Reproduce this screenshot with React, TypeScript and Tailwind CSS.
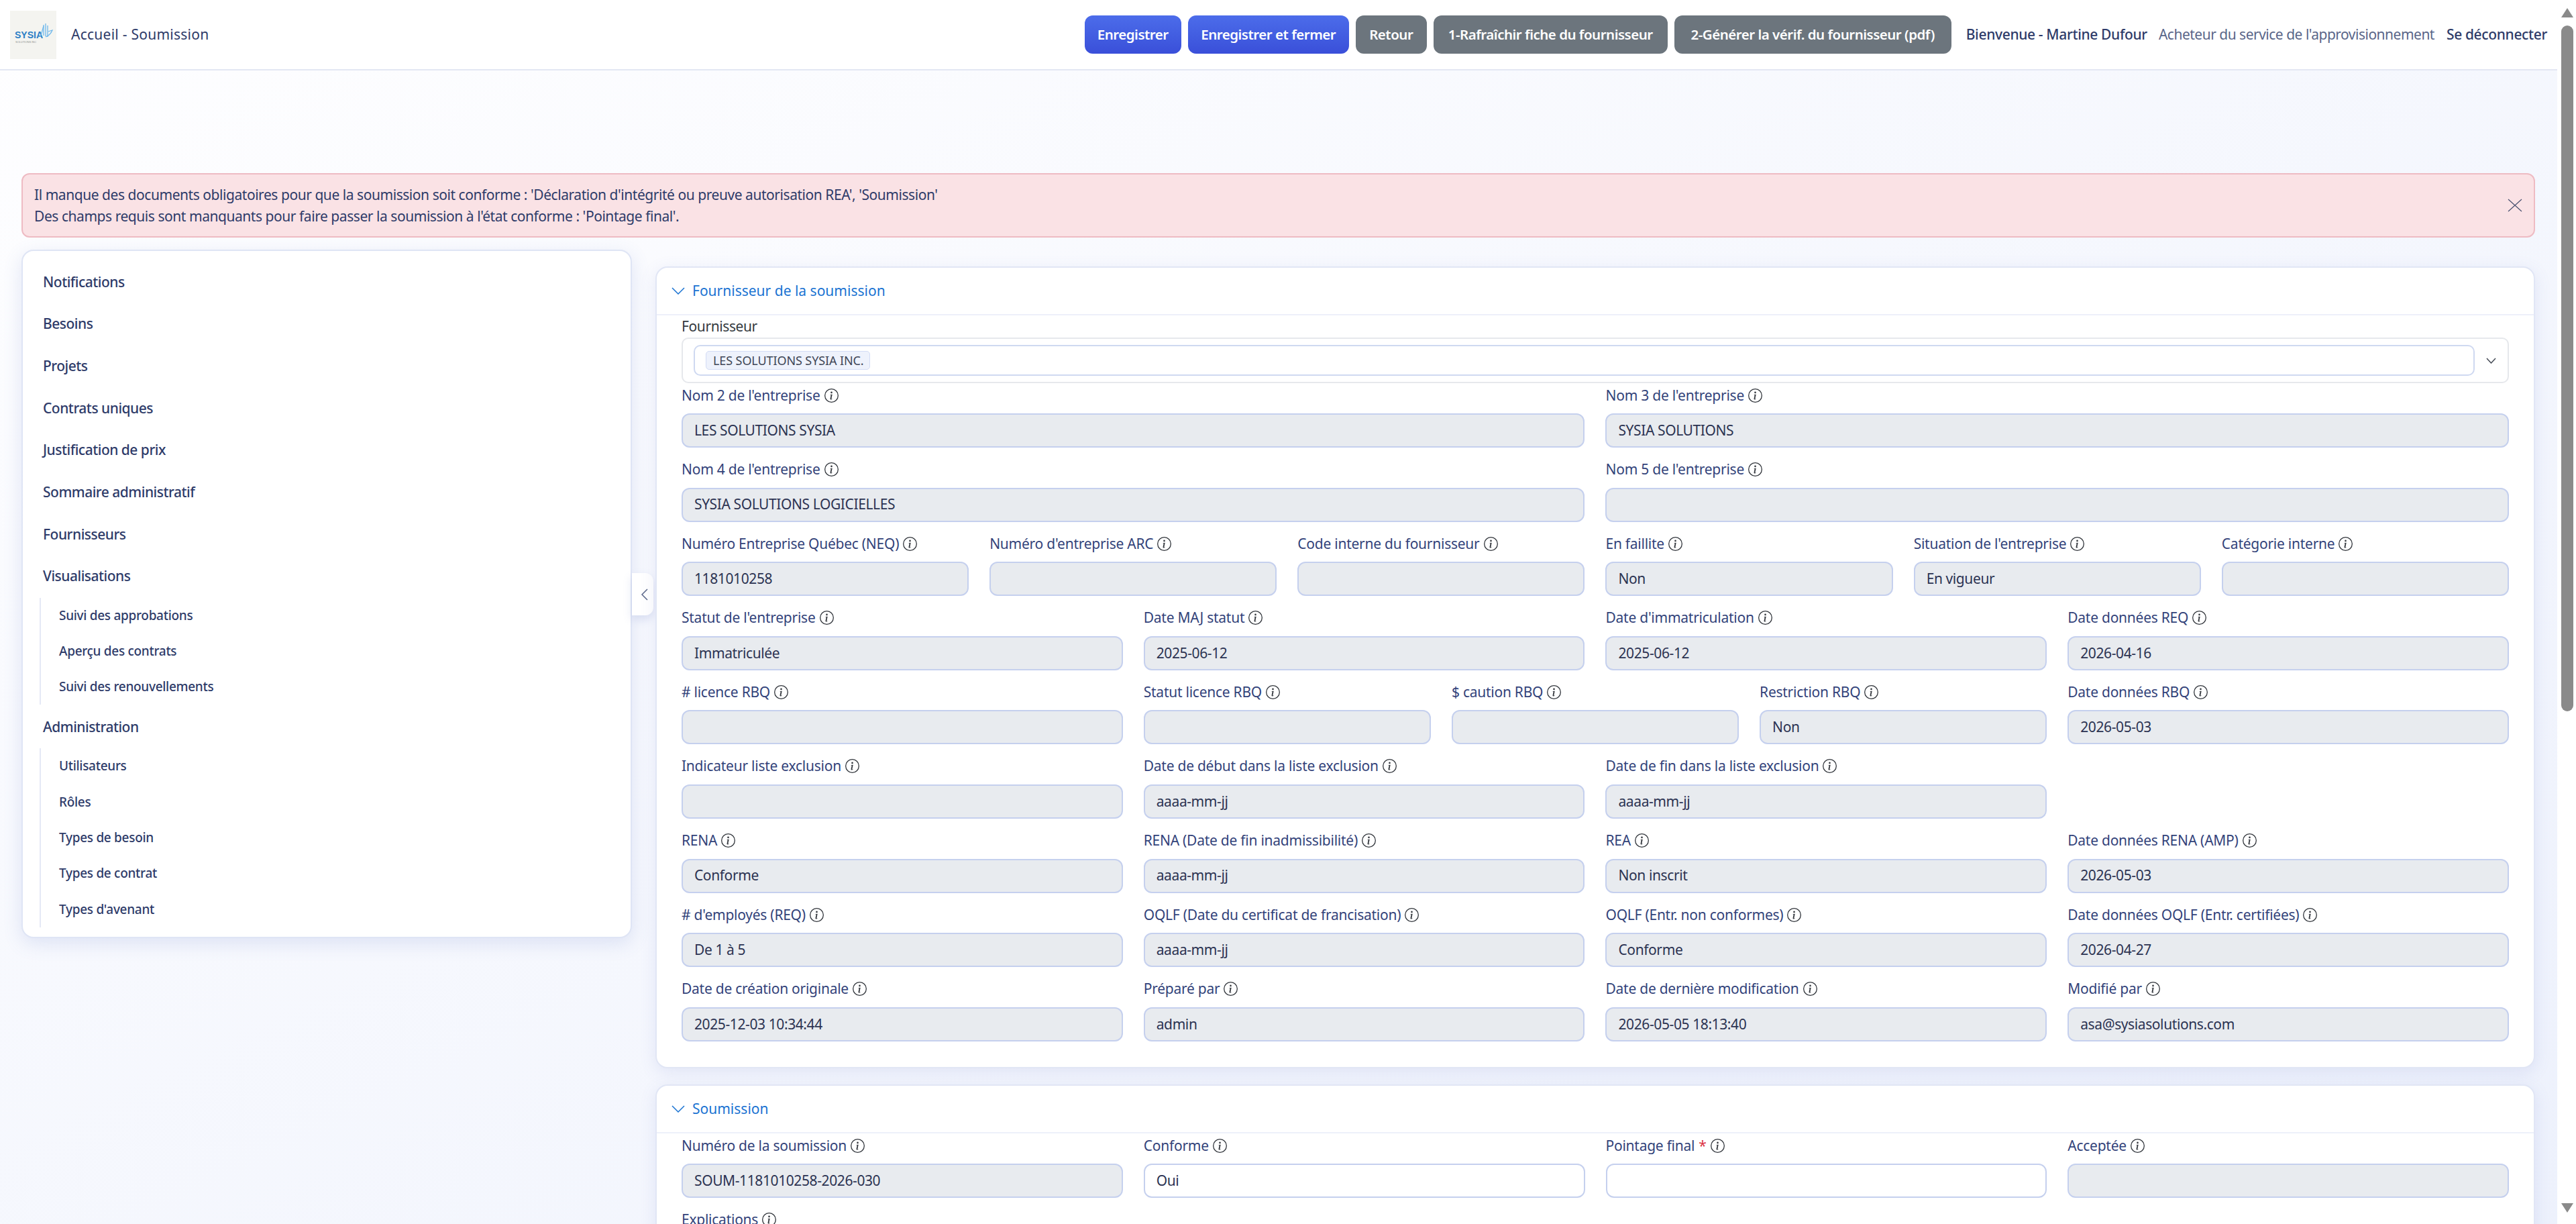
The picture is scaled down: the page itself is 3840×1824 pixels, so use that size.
import { BsInfoCircle } from "react-icons/bs";

interface FieldProps {
  label: string;
  value?: string;
  span: 2 | 3 | 6;
  required?: boolean;
  editable?: boolean;
}

const mainNav = [
  "Notifications",
  "Besoins",
  "Projets",
  "Contrats uniques",
  "Justification de prix",
  "Sommaire administratif",
  "Fournisseurs",
];

const fournisseurFields: FieldProps[] = [
  { label: "Nom 2 de l'entreprise", value: "LES SOLUTIONS SYSIA", span: 6 },
  { label: "Nom 3 de l'entreprise", value: "SYSIA SOLUTIONS", span: 6 },
  { label: "Nom 4 de l'entreprise", value: "SYSIA SOLUTIONS LOGICIELLES", span: 6 },
  { label: "Nom 5 de l'entreprise", span: 6 },
  { label: "Numéro Entreprise Québec (NEQ)", value: "1181010258", span: 2 },
  { label: "Numéro d'entreprise ARC", span: 2 },
  { label: "Code interne du fournisseur", span: 2 },
  { label: "En faillite", value: "Non", span: 2 },
  { label: "Situation de l'entreprise", value: "En vigueur", span: 2 },
  { label: "Catégorie interne", span: 2 },
  { label: "Statut de l'entreprise", value: "Immatriculée", span: 3 },
  { label: "Date MAJ statut", value: "2025-06-12", span: 3 },
  { label: "Date d'immatriculation", value: "2025-06-12", span: 3 },
  { label: "Date données REQ", value: "2026-04-16", span: 3 },
  { label: "# licence RBQ", span: 3 },
  { label: "Statut licence RBQ", span: 2 },
  { label: "$ caution RBQ", span: 2 },
  { label: "Restriction RBQ", value: "Non", span: 2 },
  { label: "Date données RBQ", value: "2026-05-03", span: 3 },
  { label: "Indicateur liste exclusion", span: 3 },
  { label: "Date de début dans la liste exclusion", value: "aaaa-mm-jj", span: 3 },
  { label: "Date de fin dans la liste exclusion", value: "aaaa-mm-jj", span: 3 },
  { label: "", span: 3 },
  { label: "RENA", value: "Conforme", span: 3 },
  { label: "RENA (Date de fin inadmissibilité)", value: "aaaa-mm-jj", span: 3 },
  { label: "REA", value: "Non inscrit", span: 3 },
  { label: "Date données RENA (AMP)", value: "2026-05-03", span: 3 },
  { label: "# d'employés (REQ)", value: "De 1 à 5", span: 3 },
  { label: "OQLF (Date du certificat de francisation)", value: "aaaa-mm-jj", span: 3 },
  { label: "OQLF (Entr. non conformes)", value: "Conforme", span: 3 },
  { label: "Date données OQLF (Entr. certifiées)", value: "2026-04-27", span: 3 },
  { label: "Date de création originale", value: "2025-12-03 10:34:44", span: 3 },
  { label: "Préparé par", value: "admin", span: 3 },
  { label: "Date de dernière modification", value: "2026-05-05 18:13:40", span: 3 },
  { label: "Modifié par", value: "asa@sysiasolutions.com", span: 3 },
];

const soumissionFields: FieldProps[] = [
  { label: "Numéro de la soumission", value: "SOUM-1181010258-2026-030", span: 3 },
  { label: "Conforme", value: "Oui", span: 3, editable: true },
  { label: "Pointage final", span: 3, required: true, editable: true },
  { label: "Acceptée", span: 3 },
];

const spanClass = { 2: "col-span-2", 3: "col-span-3", 6: "col-span-6" };

const FieldLabel = ({ label, required }: { label: string; required?: boolean }) => (
  <div className="h-[36px] mb-[9px] flex items-center gap-[6px] text-[21px] leading-none tracking-[-0.25px] text-[#33437a] whitespace-nowrap">
    <span>{label}</span>
    {required && <span className="text-[#dc3545]">*</span>}
    <BsInfoCircle className="w-[21px] h-[21px] text-[#33373d]" />
  </div>
);

const Field = ({ label, value, span, required, editable }: FieldProps) => {
  if (!label) return <div className={spanClass[span]} />;
  return (
    <div className={`${spanClass[span]} mb-[14.6px]`}>
      <FieldLabel label={label} required={required} />
      <div
        className={`h-[51px] flex items-center px-[17px] rounded-[12px] border-2 border-[#c5d0ee] text-[21px] tracking-[-0.4px] text-[#2c3352] ${
          editable ? "bg-white" : "bg-[#e8ebef]"
        }`}
      >
        {value}
      </div>
    </div>
  );
};

const Section = ({ title, children }: { title: string; children: React.ReactNode }) => (
  <section className="bg-white border-2 border-[#e1e6f5] rounded-[18px] shadow-[0_6px_24px_rgba(90,110,190,0.13)]">
    <div className="h-[71px] pl-[22px] flex items-center gap-[11px] border-b-2 border-[#edf0fa] text-[#1a73d2] text-[21px]">
      <svg viewBox="0 0 20 11" className="w-[20px] h-[11px]" fill="none" stroke="currentColor" strokeWidth="1.5">
        <path d="M1 1 L10 10 L19 1" />
      </svg>
      <span>{title}</span>
    </div>
    <div className="px-[37px]">{children}</div>
  </section>
);

const SideLink = ({ label, className }: { label: string; className?: string }) => (
  <div
    className={`h-[62.7px] flex items-center text-[21px] tracking-[-0.5px] text-[#2e3b69] font-medium ${className ?? ""}`}
  >
    {label}
  </div>
);

const SubNav = ({ items }: { items: string[] }) => (
  <div className="ml-[-5px] pl-[27px] border-l-2 border-[#e5e9f6]">
    {items.map((item) => (
      <div key={item} className="h-[53.3px] flex items-center text-[19px] tracking-[-0.3px] text-[#2e3b69] font-medium">
        {item}
      </div>
    ))}
  </div>
);

const HeaderButton = ({ label, blue, w }: { label: string; blue?: boolean; w: string }) => (
  <div
    className={`${w} h-[57px] flex items-center justify-center rounded-[12px] text-white text-[20.5px] font-semibold tracking-[-0.5px] whitespace-nowrap ${
      blue ? "bg-linear-to-b from-[#4c6cea] to-[#3a4fd9]" : "bg-[#6c757d]"
    }`}
  >
    {label}
  </div>
);

const Logo = () => (
  <div className="w-[69px] h-[72px] bg-[#f4f4f0]">
    <svg viewBox="0 0 69 72" className="w-[69px] h-[72px]">
      <text x="7" y="41" fontSize="14" fontWeight="700" fontFamily="'Liberation Sans', sans-serif" fill="#2b7fc6">
        SYSIA
      </text>
      <text x="8" y="48" fontSize="4" fontFamily="'Liberation Sans', sans-serif" fill="#8a8d8c">
        SOLUTIONS INC
      </text>
      <g fill="none" stroke="#6db7ec" strokeWidth="1.3">
        <path d="M45 38 C48 34 48 27 50 23" />
        <path d="M50 37 L50 21 M53 38 L53 19 M56 39 L56 22" />
        <path d="M53 39 C58 37 61 34 63 29 L57 31" />
      </g>
    </svg>
  </div>
);

const App = () => (
  <div className="h-[1824px] w-[3840px] overflow-hidden flex bg-white font-['Noto_Sans','Open_Sans',sans-serif]">
    <div className="w-[3812px] h-full flex flex-col bg-linear-to-br from-[#fefeff] to-[#edf1fc]">
      <div className="h-[3px] bg-[#e6e8f3]" />
      <header className="h-[105px] shrink-0 bg-white border-b-2 border-[#e3e7f3] flex items-center pl-[15px] pr-[15px]">
        <Logo />
        <div className="ml-[22px] text-[21px] tracking-[0.25px] text-[#2e3b69]">Accueil - Soumission</div>
        <div className="ml-auto flex items-center gap-[10px]">
          <HeaderButton label="Enregistrer" blue w="w-[144px]" />
          <HeaderButton label="Enregistrer et fermer" blue w="w-[240px]" />
          <HeaderButton label="Retour" w="w-[106px]" />
          <HeaderButton label="1-Rafraîchir fiche du fournisseur" w="w-[349px]" />
          <HeaderButton label="2-Générer la vérif. du fournisseur (pdf)" w="w-[413px]" />
        </div>
        <div className="ml-[22px] text-[21px] tracking-[-0.35px] text-[#2e3b69] font-medium whitespace-nowrap">
          Bienvenue - Martine Dufour
        </div>
        <div className="ml-[17px] text-[21px] tracking-[-0.5px] text-[#5a6689] whitespace-nowrap">
          Acheteur du service de l'approvisionnement
        </div>
        <div className="ml-[18px] text-[21px] tracking-[-0.35px] text-[#2e3b69] font-medium whitespace-nowrap">
          Se déconnecter
        </div>
      </header>

      <div className="mt-[153px] ml-[32px] w-[3747px] h-[96px] shrink-0 flex items-center justify-between pl-[17px] pr-[10px] bg-[#fae2e5] border-2 border-[#eebbc3] rounded-[12px] text-[21px] tracking-[-0.45px] text-[#2e3b69]">
        <div className="leading-[32px]">
          <div>
            Il manque des documents obligatoires pour que la soumission soit conforme : 'Déclaration d'intégrité ou preuve autorisation REA', 'Soumission'
          </div>
          <div>Des champs requis sont manquants pour faire passer la soumission à l'état conforme : 'Pointage final'.</div>
        </div>
        <svg viewBox="0 0 36 36" className="w-[36px] h-[36px] text-[#4a5270]" fill="none" stroke="currentColor" strokeWidth="1.2">
          <path d="M8 9 L28 27 M28 9 L8 27" />
        </svg>
      </div>

      <div className="mt-[18px] flex items-start">
        <aside className="ml-[32px] w-[910px] h-[1026px] shrink-0 bg-white border-2 border-[#dfe5f5] rounded-[18px] shadow-[0_8px_28px_rgba(90,110,190,0.16)] pl-[30px] pt-[15px]">
          {mainNav.map((item) => (
            <SideLink key={item} label={item} />
          ))}
          <SideLink label="Visualisations" />
          <SubNav items={["Suivi des approbations", "Aperçu des contrats", "Suivi des renouvellements"]} />
          <SideLink label="Administration" className="mt-[2px]" />
          <SubNav items={["Utilisateurs", "Rôles", "Types de besoin", "Types de contrat", "Types d'avenant"]} />
        </aside>

        <div className="mt-[482px] w-[32px] h-[63px] shrink-0 bg-white rounded-r-[12px] shadow-[0_6px_14px_rgba(90,110,190,0.18)] flex items-center justify-center">
          <svg viewBox="0 0 11 18" className="w-[11px] h-[18px] ml-[4px] text-[#5a6689]" fill="none" stroke="currentColor" strokeWidth="1.5">
            <path d="M10 1 L2 9 L10 17" />
          </svg>
        </div>

        <div className="ml-[3px] w-[2802px] mt-[25px] flex flex-col gap-[24px]">
          <Section title="Fournisseur de la soumission">
            <div className="h-[33px] flex items-center text-[21px] tracking-[-0.4px] text-[#343a40]">Fournisseur</div>
            <div className="h-[68px] flex items-center pl-[16px] pr-[17px] border-2 border-[#e6e8ec] rounded-[10px]">
              <div className="flex-1 h-[46px] flex items-center pl-[16px] border-2 border-[#cfd9f1] rounded-[10px]">
                <div className="h-[28px] w-[245px] flex items-center pl-[10px] bg-[#eef2fc] border border-[#d3dcf5] rounded-[5px] text-[18px] tracking-[-0.1px] text-[#3f4656] whitespace-nowrap">
                  LES SOLUTIONS SYSIA INC.
                </div>
              </div>
              <svg viewBox="0 0 15 9" className="ml-[17px] w-[15px] h-[9px] text-[#444a55]" fill="none" stroke="currentColor" strokeWidth="1.5">
                <path d="M1 1 L7.5 8 L14 1" />
              </svg>
            </div>
            <div className="grid grid-cols-12 gap-x-[31px] pb-[24px]">
              {fournisseurFields.map((field, i) => (
                <Field key={i} {...field} />
              ))}
            </div>
          </Section>

          <Section title="Soumission">
            <div className="grid grid-cols-12 gap-x-[31px]">
              {soumissionFields.map((field) => (
                <Field key={field.label} {...field} />
              ))}
            </div>
            <FieldLabel label="Explications" />
          </Section>
        </div>
      </div>
    </div>

    <div className="w-[28px] h-full bg-white flex flex-col items-center pt-[12px] pb-[17px] pl-[2px]">
      <div className="w-0 h-0 border-x-[9px] border-x-transparent border-b-[14px] border-b-[#8a8a8a]" />
      <div className="mt-[12px] w-[18px] h-[1022px] rounded-[9px] bg-[#8a8a8a]" />
      <div className="mt-auto w-0 h-0 border-x-[9px] border-x-transparent border-t-[14px] border-t-[#8a8a8a]" />
    </div>
  </div>
);

export default App;
